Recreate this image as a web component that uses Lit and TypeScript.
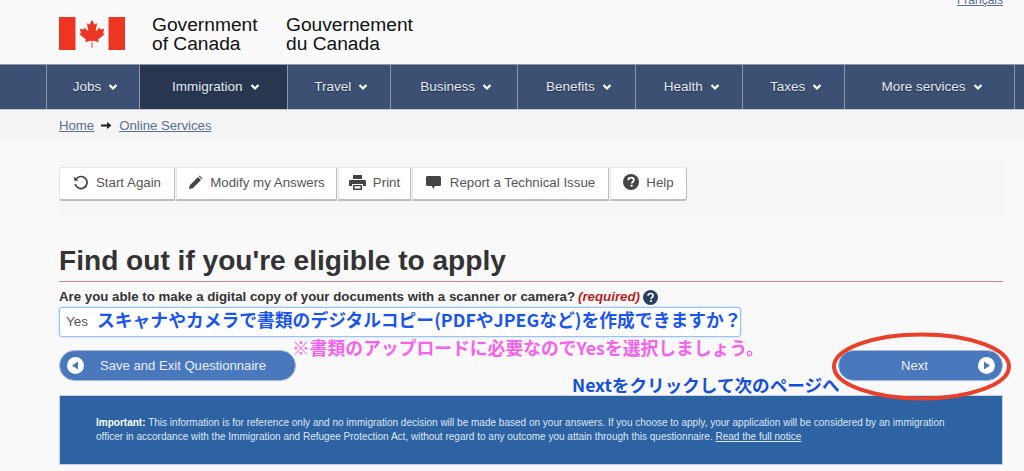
import { LitElement, html, css, svg } from "lit";
import { customElement } from "lit/decorators.js";

const NAV: [string, number][] = [
  ["Jobs", 93], ["Immigration", 148], ["Travel", 103], ["Business", 127],
  ["Benefits", 119], ["Health", 107], ["Taxes", 102], ["More services", 170],
];
const LEAF = "M4890 4430l-45-863a95 95 0 0 1 111-98l859 151-116-320a65 65 0 0 1 20-73l941-762-212-99a65 65 0 0 1-34-79l186-572-542 115a65 65 0 0 1-73-38l-105-247-423 454a65 65 0 0 1-111-57l204-1052-327 189a65 65 0 0 1-91-27l-332-652-332 652a65 65 0 0 1-91 27l-327-189 204 1052a65 65 0 0 1-111 57l-423-454-105 247a65 65 0 0 1-73 38l-542-115 186 572a65 65 0 0 1-34 79l-212 99 941 762a65 65 0 0 1 20 73l-116 320 859-151a95 95 0 0 1 111 98l-45 863z";

const chev = svg`<svg class="chev" viewBox="0 0 10 8" width="10" height="8"><path d="M1.500 2 5 5.500 8.500 2" fill="none" stroke="#fff" stroke-width="2.200"/></svg>`;

@customElement("app-root")
export class AppRoot extends LitElement {
  static styles = css`
    :host { display: block; width: 1024px; height: 471px; overflow: hidden; position: relative;
      background: #f9f9f9; font-family: "Liberation Sans", Arial, sans-serif; color: #333; }
    a { color: inherit; }
    .top { height: 64px; box-sizing: border-box; background: #fafafa; padding: 17px 0 0 59px; display: flex; position: relative; }
    .flag { width: 66px; height: 33px; display: block; }
    .sig { font-size: 19.200px; line-height: 19px; color: #111; margin-top: -2px; }
    .sig.en { margin-left: 27px; width: 134px; }
    .fr { position: absolute; right: 21px; top: -7px; font-size: 12px; color: #5a6f92; }
    nav { height: 46px; box-sizing: border-box; background: #3b5072; border-top: 1px solid #8b99ae; border-bottom: 1px solid #c3cad5;
      display: flex; padding-left: 46px; color: #e6e9ee; font-size: 13.500px; }
    .item { box-sizing: border-box; border-left: 1px solid #8b99ae; display: flex; align-items: center; justify-content: center; gap: 7px; padding: 0 0 2px 5px;
      text-shadow: 0 1px 1px #1d2b42; }
    .item.on { background: #28374f; }
    .item.end { width: 10px; }
    .chev { margin-top: 1px; }
    .crumbs { height: 31px; box-sizing: border-box; background: #f5f5f5; padding: 8px 0 0 59px; font-size: 13.200px; color: #5a6f92; display: flex; gap: 7px; align-items: flex-start; line-height: 16px; }
    .crumbs svg { margin-top: 3px; }
    main { padding: 19px 21px 0 59px; }
    .band { height: 55px; box-sizing: border-box; background: #f6f6f6; padding-top: 7px; display: flex; gap: 1px; }
    .btn { height: 34px; box-sizing: border-box; background: #fff; border: 1px solid #e4e4e4; border-right: 1px solid #bdbdbd; border-bottom: 2px solid #bdbdbd;
      display: flex; align-items: center; justify-content: center; gap: 7px; font-size: 13.300px; color: #555; padding-bottom: 3px; }
    .btn.first { border-radius: 3px 0 0 3px; }
    .btn.last { border-radius: 0 3px 3px 0; }
    h1 { margin: 29px 0 0; font-size: 28.100px; line-height: 34px; font-weight: bold; color: #333; padding-bottom: 3px; border-bottom: 1px solid #c98a8a; }
    .lab { margin-top: 7px; font-size: 13.270px; line-height: 16px; font-weight: bold; display: flex; align-items: center; gap: 3px; color: #333; white-space: nowrap; }
    .lab i { color: #b3261e; }
    .input { margin-top: 2px; width: 682px; height: 30px; box-sizing: border-box; background: #fff; border: 1px solid #9cc1ec; border-radius: 3px;
      box-shadow: 0 0 3px #b9d4f3; font-size: 13.500px; color: #555; padding: 6px 0 0 6px; line-height: 16px; }
    .row { margin-top: 13px; display: flex; justify-content: space-between; }
    .pill { height: 31px; box-sizing: border-box; border-radius: 16px; background: #4a78bd; border: 1px solid #a5bcdd; color: #e9eff8; font-size: 13.100px; display: flex; align-items: center; }
    .pill span { margin-bottom: 1px; }
    .save { width: 237px; padding-left: 7px; gap: 16px; }
    .next { width: 165px; padding: 0 7px 0 62px; justify-content: space-between; }
    .notice { margin-top: 14px; height: 70px; box-sizing: border-box; background: #2d62a3; border: 1px solid #c5d3e6; color: #dfe7f2; font-size: 10.030px; line-height: 14px; padding: 20px 0 0 36px; }
    .notice b { color: #fff; }
    .note { position: absolute; font-family: "Noto Sans CJK JP", sans-serif; font-weight: bold; white-space: nowrap; line-height: 1.200; }
    .n1 { left: 97px; top: 309px; font-size: 17.800px; color: #1a55ee; }
    .n2 { left: 292px; top: 337px; font-size: 17.800px; color: #f562ee; }
    .n3 { left: 572px; top: 374px; font-size: 17.600px; color: #1450d8; }
    .ring { position: absolute; left: 830px; top: 331px; }
  `;

  render() {
    return html`
      <div class="top">
        <svg class="flag" viewBox="0 0 9600 4800" preserveAspectRatio="none">
          <rect width="2400" height="4800" fill="#ee3524"/><rect x="7200" width="2400" height="4800" fill="#ee3524"/>
          <path d="${LEAF}" fill="#ee3524"/>
        </svg>
        <div class="sig en">Government<br>of Canada</div>
        <div class="sig">Gouvernement<br>du Canada</div>
        <a class="fr" href="#">Français</a>
      </div>
      <nav>
        ${NAV.map(([t, w]) => html`<div class="item ${t === "Immigration" ? "on" : ""}" style="width:${w}px">${t} ${chev}</div>`)}
        <div class="item end"></div>
      </nav>
      <div class="crumbs">
        <a href="#">Home</a>
        <svg width="11" height="9" viewBox="0 0 11 9"><path d="M0 3.500h6V1l4.500 3.500L6 8V5.500H0z" fill="#222"/></svg>
        <a href="#">Online Services</a>
      </div>
      <main>
        <div class="band">
          <div class="btn first" style="width:116px">
            <svg width="16" height="16" viewBox="0 0 16 16"><path d="M3 5.200A6 6 0 1 1 2.200 10" fill="none" stroke="#444" stroke-width="1.700"/><path d="M1.200 2.500v4.200h4.200z" fill="#444"/></svg>
            Start Again</div>
          <div class="btn" style="width:161px">
            <svg width="15" height="15" viewBox="0 0 15 15"><path d="M1 14l.8-3.800L10 2l3 3-8.200 8.200zM10.800 1.200l.7-.7 3 3-.7.7z" fill="#444"/></svg>
            Modify my Answers</div>
          <div class="btn" style="width:73px">
            <svg width="17" height="15" viewBox="0 0 17 15"><path d="M4 0h9v4H4zM1 5h15a1 1 0 0 1 1 1v5h-3V9H3v2H0V6a1 1 0 0 1 1-1zM4 10h9v5H4zM5.500 11.200v2.300h6v-2.300z" fill="#444" fill-rule="evenodd"/></svg>
            Print</div>
          <div class="btn" style="width:197px;gap:9px">
            <svg width="15" height="13" viewBox="0 0 15 13"><path d="M1.500 0h12A1.500 1.500 0 0 1 15 1.500v7a1.500 1.500 0 0 1-1.500 1.500H9l-2 3-1-3H1.500A1.500 1.500 0 0 1 0 8.500v-7A1.500 1.500 0 0 1 1.500 0z" fill="#444"/></svg>
            Report a Technical Issue</div>
          <div class="btn last" style="width:77px">
            <svg width="16" height="16" viewBox="0 0 16 16"><circle cx="8" cy="8" r="8" fill="#444"/><path d="M5.300 6.200C5.400 4.500 6.600 3.700 8.100 3.700c1.600 0 2.700.9 2.700 2.300 0 2-2.100 1.900-2.100 3.600" fill="none" stroke="#fff" stroke-width="1.800"/><rect x="7.600" y="10.700" width="2" height="2" fill="#fff"/></svg>
            Help</div>
        </div>
        <h1>Find out if you're eligible to apply</h1>
        <div class="lab">Are you able to make a digital copy of your documents with a scanner or camera? <i>(required)</i>
          <svg width="15" height="15" viewBox="0 0 16 16"><circle cx="8" cy="8" r="8" fill="#27405f"/><path d="M5.300 6.200C5.400 4.500 6.600 3.700 8.100 3.700c1.600 0 2.700.9 2.700 2.300 0 2-2.100 1.900-2.100 3.600" fill="none" stroke="#fff" stroke-width="1.800"/><rect x="7.600" y="10.700" width="2" height="2" fill="#fff"/></svg>
        </div>
        <div class="input">Yes</div>
        <div class="row">
          <div class="pill save">
            <svg width="17" height="17" viewBox="0 0 17 17"><circle cx="8.500" cy="8.500" r="8.500" fill="#fff"/><path d="M11 4.500v8L5 8.500z" fill="#4a78bd"/></svg>
            <span>Save and Exit Questionnaire</span></div>
          <div class="pill next"><span>Next</span>
            <svg width="17" height="17" viewBox="0 0 17 17"><circle cx="8.500" cy="8.500" r="8.500" fill="#fff"/><path d="M6 4.500v8l6-4z" fill="#4a78bd"/></svg></div>
        </div>
        <div class="notice"><b>Important:</b> This information is for reference only and no immigration decision will be made based on your answers. If you choose to apply, your application will be considered by an immigration<br>officer in accordance with the Immigration and Refugee Protection Act, without regard to any outcome you attain through this questionnaire. <a href="#">Read the full notice</a></div>
      </main>
      <div class="note n1">スキャナやカメラで書類のデジタルコピー(PDFやJPEGなど)を作成できますか？</div>
      <div class="note n2">※書類のアップロードに必要なのでYesを選択しましょう。</div>
      <div class="note n3">Nextをクリックして次のページへ</div>
      <svg class="ring" width="182" height="71" viewBox="0 0 182 71"><ellipse cx="91.500" cy="35.500" rx="87.500" ry="32" fill="none" stroke="#e8402a" stroke-width="4"/></svg>
    `;
  }
}
